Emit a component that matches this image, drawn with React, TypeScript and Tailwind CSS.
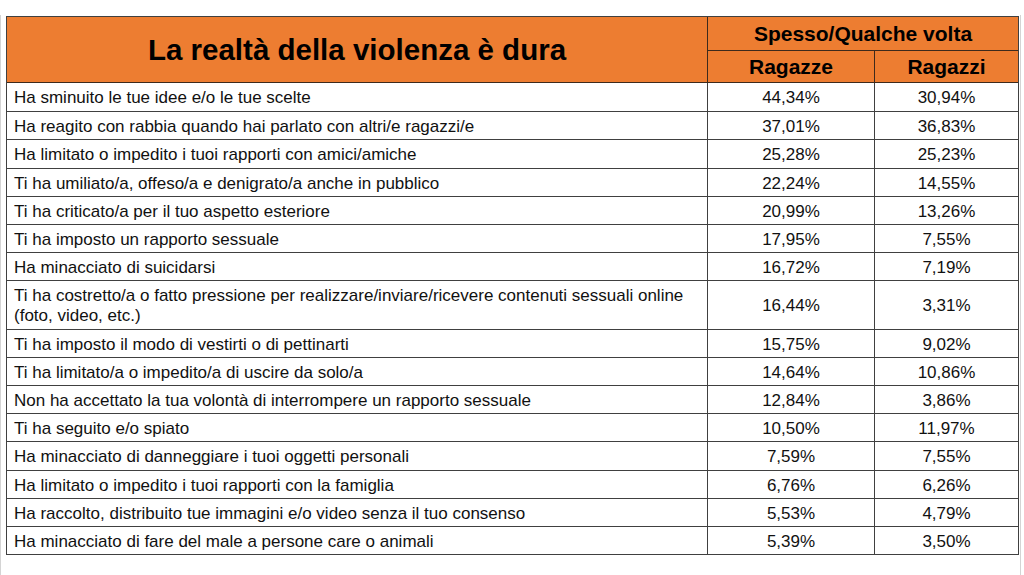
const rows = [
  { label: "Ha sminuito le tue idee e/o le tue scelte", f: "44,34%", m: "30,94%", h: "h-[29px]" },
  { label: "Ha reagito con rabbia quando hai parlato con altri/e ragazzi/e", f: "37,01%", m: "36,83%", h: "h-[28px]" },
  { label: "Ha limitato o impedito i tuoi rapporti con amici/amiche", f: "25,28%", m: "25,23%", h: "h-[29px]" },
  { label: "Ti ha umiliato/a, offeso/a e denigrato/a anche in pubblico", f: "22,24%", m: "14,55%", h: "h-[28px]" },
  { label: "Ti ha criticato/a per il tuo aspetto esteriore", f: "20,99%", m: "13,26%", h: "h-[28px]" },
  { label: "Ti ha imposto un rapporto sessuale", f: "17,95%", m: "7,55%", h: "h-[28px]" },
  { label: "Ha minacciato di suicidarsi", f: "16,72%", m: "7,19%", h: "h-[28px]" },
  {
    label: "Ti ha costretto/a o fatto pressione per realizzare/inviare/ricevere contenuti sessuali online (foto, video, etc.)",
    f: "16,44%",
    m: "3,31%",
    h: "h-[49px]",
  },
  { label: "Ti ha imposto il modo di vestirti o di pettinarti", f: "15,75%", m: "9,02%", h: "h-[28px]" },
  { label: "Ti ha limitato/a o impedito/a di uscire da solo/a", f: "14,64%", m: "10,86%", h: "h-[28px]" },
  { label: "Non ha accettato la tua volontà di interrompere un rapporto sessuale", f: "12,84%", m: "3,86%", h: "h-[28px]" },
  { label: "Ti ha seguito e/o spiato", f: "10,50%", m: "11,97%", h: "h-[28px]" },
  { label: "Ha minacciato di danneggiare i tuoi oggetti personali", f: "7,59%", m: "7,55%", h: "h-[29px]" },
  { label: "Ha limitato o impedito i tuoi rapporti con la famiglia", f: "6,76%", m: "6,26%", h: "h-[28px]" },
  { label: "Ha raccolto, distribuito tue immagini e/o video senza il tuo consenso", f: "5,53%", m: "4,79%", h: "h-[28px]" },
  { label: "Ha minacciato di fare del male a persone care o animali", f: "5,39%", m: "3,50%", h: "h-[28px]" },
]

export default function App() {
  return (
    <div className="w-[1024px] h-[575px] bg-white pt-[15px] font-['Liberation_Sans',Arial,sans-serif] text-black">
      <div className="w-[1021px] h-[560px] border-l border-r border-[#d4d4d4] pt-px pl-[5px]">
        <div className="w-[1013px] border-t border-l border-r border-[#404040]">
          {/* Header */}
          <div className="flex h-[66px] bg-[#ED7D31] border-b border-[#3d2a1c]">
            <div className="w-[701px] border-r border-[#3d2a1c] flex items-center justify-center">
              <span className="text-[29.5px] font-bold leading-none">La realtà della violenza è dura</span>
            </div>
            <div className="flex-1 flex flex-col">
              <div className="h-[34px] border-b border-[#3d2a1c] flex items-center justify-center">
                <span className="text-[21px] font-bold leading-none">Spesso/Qualche volta</span>
              </div>
              <div className="flex-1 flex">
                <div className="w-[167px] border-r border-[#3d2a1c] flex items-center justify-center">
                  <span className="text-[21px] font-bold leading-none">Ragazze</span>
                </div>
                <div className="flex-1 flex items-center justify-center">
                  <span className="text-[21px] font-bold leading-none">Ragazzi</span>
                </div>
              </div>
            </div>
          </div>

          {/* Body */}
          {rows.map((r) => (
            <div key={r.label} className={`flex border-b border-[#404040] text-[17px] text-[#111] ${r.h}`}>
              <div className="w-[701px] border-r border-[#404040] flex items-center pl-[7px] pr-2 pt-[2px] leading-[20px]">
                {r.label}
              </div>
              <div className="w-[167px] border-r border-[#404040] flex items-center justify-center pt-[2px]">{r.f}</div>
              <div className="flex-1 flex items-center justify-center pt-[2px]">{r.m}</div>
            </div>
          ))}
        </div>
      </div>
    </div>
  )
}
